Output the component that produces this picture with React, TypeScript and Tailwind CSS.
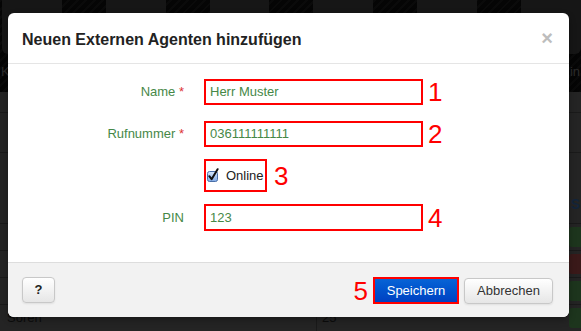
import React from "react";

const tiles = [2, 108, 214, 322, 428, 534];

const rows = [
  { name: "", num: "", badge: "bg-[#1d351d]" },
  { name: "", num: "", badge: "bg-[#3a1919]" },
  { name: "", num: "", badge: "bg-[#1d351d]" },
  { name: "Sören", num: "25", badge: "bg-[#1d351d]" },
];

function Backdrop() {
  return (
    <div className="flex h-full flex-col">
      <div className="relative h-[95px] bg-[#060606] bg-[repeating-linear-gradient(135deg,#0a0a0a_0px,#0a0a0a_2px,#050505_2px,#050505_6px)]">
        <div className="flex gap-[44px] pl-[2px]">
          {tiles.map((t) => (
            <div key={t} className="-mt-[12px] h-[66px] w-[62px] rounded-[6px] bg-[#161616]" />
          ))}
        </div>
        <div className="flex justify-between px-[1px] pt-[8px] text-[13px] text-[#2c2c2c]">
          <span>K</span>
          <span>in</span>
        </div>
      </div>
      <div className="h-[22px] border-b border-[#1a1a1a]" />
      <div className="h-[42px] border-b border-[#1a1a1a]" />
      <div className="flex h-[72px] items-end justify-end pb-[8px] pr-[1px] text-[14px] font-bold text-[#13243a]">
        S
      </div>
      {rows.map((r, i) => (
        <div key={i} className="flex h-[27px] shrink-0 items-center border-t border-[#1a1a1a] text-[13px] text-[#0c0c0c]">
          <div className="h-full w-[317px] border-r border-[#1a1a1a] pl-[7px] leading-[26px]">{r.name}</div>
          <div className="flex-1 pl-[5px]">{r.num}</div>
          <div className={`h-[20px] w-[12px] rounded-l-[3px] ${r.badge}`} />
        </div>
      ))}
    </div>
  );
}

function Mark({ n, className = "" }: { n: string; className?: string }) {
  return <span className={`text-[26px] leading-[20px] text-[#ff0000] ${className}`}>{n}</span>;
}

function Field({ label, value, req, n, h = "h-[26px]" }: { label: string; value: string; req?: boolean; n: string; h?: string }) {
  return (
    <div className={`flex items-center ${h}`}>
      <div className="w-[176px] text-right text-[13px] text-[#468847]">
        {label}
        {req && <span className="text-[#d33]"> *</span>}
      </div>
      <div className={`ml-[20px] flex w-[219px] items-center border-2 border-[#ff0000] bg-white pl-[4px] text-[13px] text-[#468847] ${h}`}>
        {value}
      </div>
      <Mark n={n} className="ml-[5px]" />
    </div>
  );
}

function Checkbox() {
  return (
    <svg width="12" height="14" viewBox="0 0 12 14" className="-mt-[2px]">
      <defs>
        <linearGradient id="cb" x1="0" y1="0" x2="0" y2="1">
          <stop offset="0" stopColor="#d8e8fb" />
          <stop offset="1" stopColor="#7fa9e6" />
        </linearGradient>
      </defs>
      <rect x="0.5" y="3.5" width="10" height="10" rx="2" fill="url(#cb)" stroke="#4a6fa8" />
      <path d="M2.3 8.2 L4.6 11.2 L10.6 1.2" fill="none" stroke="#111" strokeWidth="2" strokeLinecap="round" strokeLinejoin="round" />
    </svg>
  );
}

function Modal() {
  return (
    <div className="absolute left-[8px] top-[13px] w-[561px] overflow-hidden rounded-[6px] bg-white shadow-[0_3px_7px_rgba(0,0,0,0.3)]">
      <div className="flex h-[51px] items-start justify-between border-b border-[#e5e5e5] pl-[14px] pr-[16px] pt-[15px]">
        <h3 className="text-[16px] font-bold leading-[24px] text-[#222]">Neuen Externen Agenten hinzufügen</h3>
        <span className="text-[20px] font-bold leading-[20px] text-[#bdbdbd]">×</span>
      </div>
      <div className="flex flex-col pb-[31px] pt-[15px]">
        <Field label="Name" value="Herr Muster" req n="1" />
        <div className="mt-[16px]">
          <Field label="Rufnummer" value="036111111111" req n="2" />
        </div>
        <div className="mt-[12px] flex h-[33px] items-center pl-[196px]">
          <div className="flex h-[33px] w-[63px] items-center gap-[7px] border-2 border-[#ff0000] pl-[1px] text-[13px] text-[#222]">
            <Checkbox />
            <span>Online</span>
          </div>
          <Mark n="3" className="ml-[7px]" />
        </div>
        <div className="mt-[12px]">
          <Field label="PIN" value="123" n="4" h="h-[27px]" />
        </div>
      </div>
      <div className="flex h-[55px] items-start justify-between border-t border-[#dddddd] bg-[#f2f2f2] pl-[14px] pr-[16px] pt-[14px]">
        <button className="h-[26px] w-[33px] rounded-[4px] border border-[#c8c8c8] bg-linear-to-b from-white to-[#e6e6e6] text-[13px] font-bold text-[#222] shadow-[0_1px_2px_rgba(0,0,0,0.08)]">
          ?
        </button>
        <div className="flex h-[27px] items-center">
          <Mark n="5" className="mr-[5px]" />
          <button className="h-[27px] w-[86px] border-2 border-[#ff0000] bg-linear-to-b from-[#0864d6] to-[#0040c2] text-[13px] text-white">
            Speichern
          </button>
          <button className="ml-[5px] h-[26px] w-[89px] rounded-[4px] border border-[#c8c8c8] bg-linear-to-b from-white to-[#e6e6e6] text-[13px] text-[#333] shadow-[0_1px_2px_rgba(0,0,0,0.08)]">
            Abbrechen
          </button>
        </div>
      </div>
    </div>
  );
}

export default function App() {
  return (
    <div className="relative h-[331px] w-[581px] overflow-hidden bg-[#242424] font-['Liberation_Sans',Arial,sans-serif]">
      <Backdrop />
      <Modal />
    </div>
  );
}
